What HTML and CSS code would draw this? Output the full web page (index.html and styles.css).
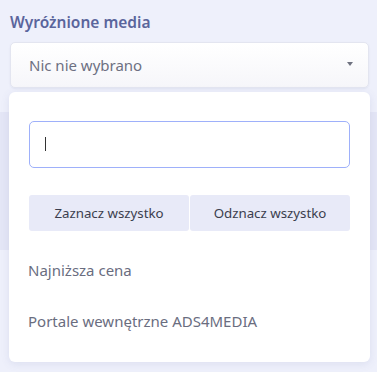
FILE: index.html
```html
<!DOCTYPE html>
<html lang="pl">
<head>
<meta charset="utf-8">
<link rel="stylesheet" href="styles.css">
</head>
<body>
<div class="page">
  <div class="label">Wyróżnione media</div>
  <div class="select-wrap">
    <div class="select">
      <span class="select-text">Nic nie wybrano</span>
      <span class="caret"></span>
    </div>
    <div class="dropdown">
      <div class="search"><span class="cursor"></span></div>
      <div class="actions">
        <button class="btn">Zaznacz wszystko</button>
        <button class="btn">Odznacz wszystko</button>
      </div>
      <ul class="options">
        <li class="option">Najniższa cena</li>
        <li class="option">Portale wewnętrzne ADS4MEDIA</li>
      </ul>
    </div>
  </div>
  <div class="band"></div>
</div>
</body>
</html>
```

FILE: styles.css
```css
html, body {
  margin: 0;
  padding: 0;
}
body {
  background: #eef0fb;
  font-family: "Noto Sans", "Open Sans", sans-serif;
  width: 377px;
  height: 372px;
  overflow: hidden;
}
.page {
  padding: 12px 8px 0 10px;
}
.label {
  font-size: 15.5px;
  font-weight: 600;
  color: #5a659c;
  line-height: 20px;
  height: 20px;
  margin-bottom: 10px;
}
.select-wrap {
  position: relative;
  z-index: 2;
}
.select {
  height: 44px;
  border: 1px solid #e3e5f0;
  border-radius: 5px;
  background: linear-gradient(#ffffff, #f6f6fa);
  box-shadow: 0 1px 2px rgba(80, 90, 140, 0.08);
  display: flex;
  align-items: center;
  justify-content: space-between;
  padding: 0 15px 0 18px;
}
.select-text {
  font-size: 15px;
  color: #6d7082;
}
.caret {
  width: 0;
  height: 0;
  border-left: 3.5px solid transparent;
  border-right: 3.5px solid transparent;
  border-top: 4px solid #6f7280;
  margin-top: -2px;
}
.dropdown {
  position: absolute;
  top: 50px;
  left: -1px;
  right: -1px;
  height: 270px;
  box-sizing: border-box;
  background: #ffffff;
  border-radius: 6px;
  box-shadow: 0 2px 8px rgba(90, 100, 160, 0.12);
  padding: 29px 20px 0 20px;
}
.search {
  height: 47px;
  box-sizing: border-box;
  border: 1px solid #9eb0fa;
  border-radius: 5px;
  display: flex;
  align-items: center;
  padding-left: 15px;
}
.cursor {
  width: 1px;
  height: 14px;
  background: #333;
  margin-top: -1px;
}
.actions {
  display: flex;
  gap: 1px;
  margin-top: 27px;
}
.btn {
  flex: 1;
  height: 36px;
  border: 0;
  background: #e8eaf8;
  border-radius: 3px;
  font-family: inherit;
  font-size: 13.3px;
  color: #3b3e4e;
  padding: 0;
}
.options {
  list-style: none;
  margin: 14px 0 0 0;
  padding: 0;
}
.option {
  height: 51px;
  line-height: 51px;
  font-size: 15px;
  color: #6a6d7f;
  margin-left: -1px;
}
.band {
  margin: 24px -8px 0 -10px;
  height: 138px;
  background: #e4e6f6;
}
```
